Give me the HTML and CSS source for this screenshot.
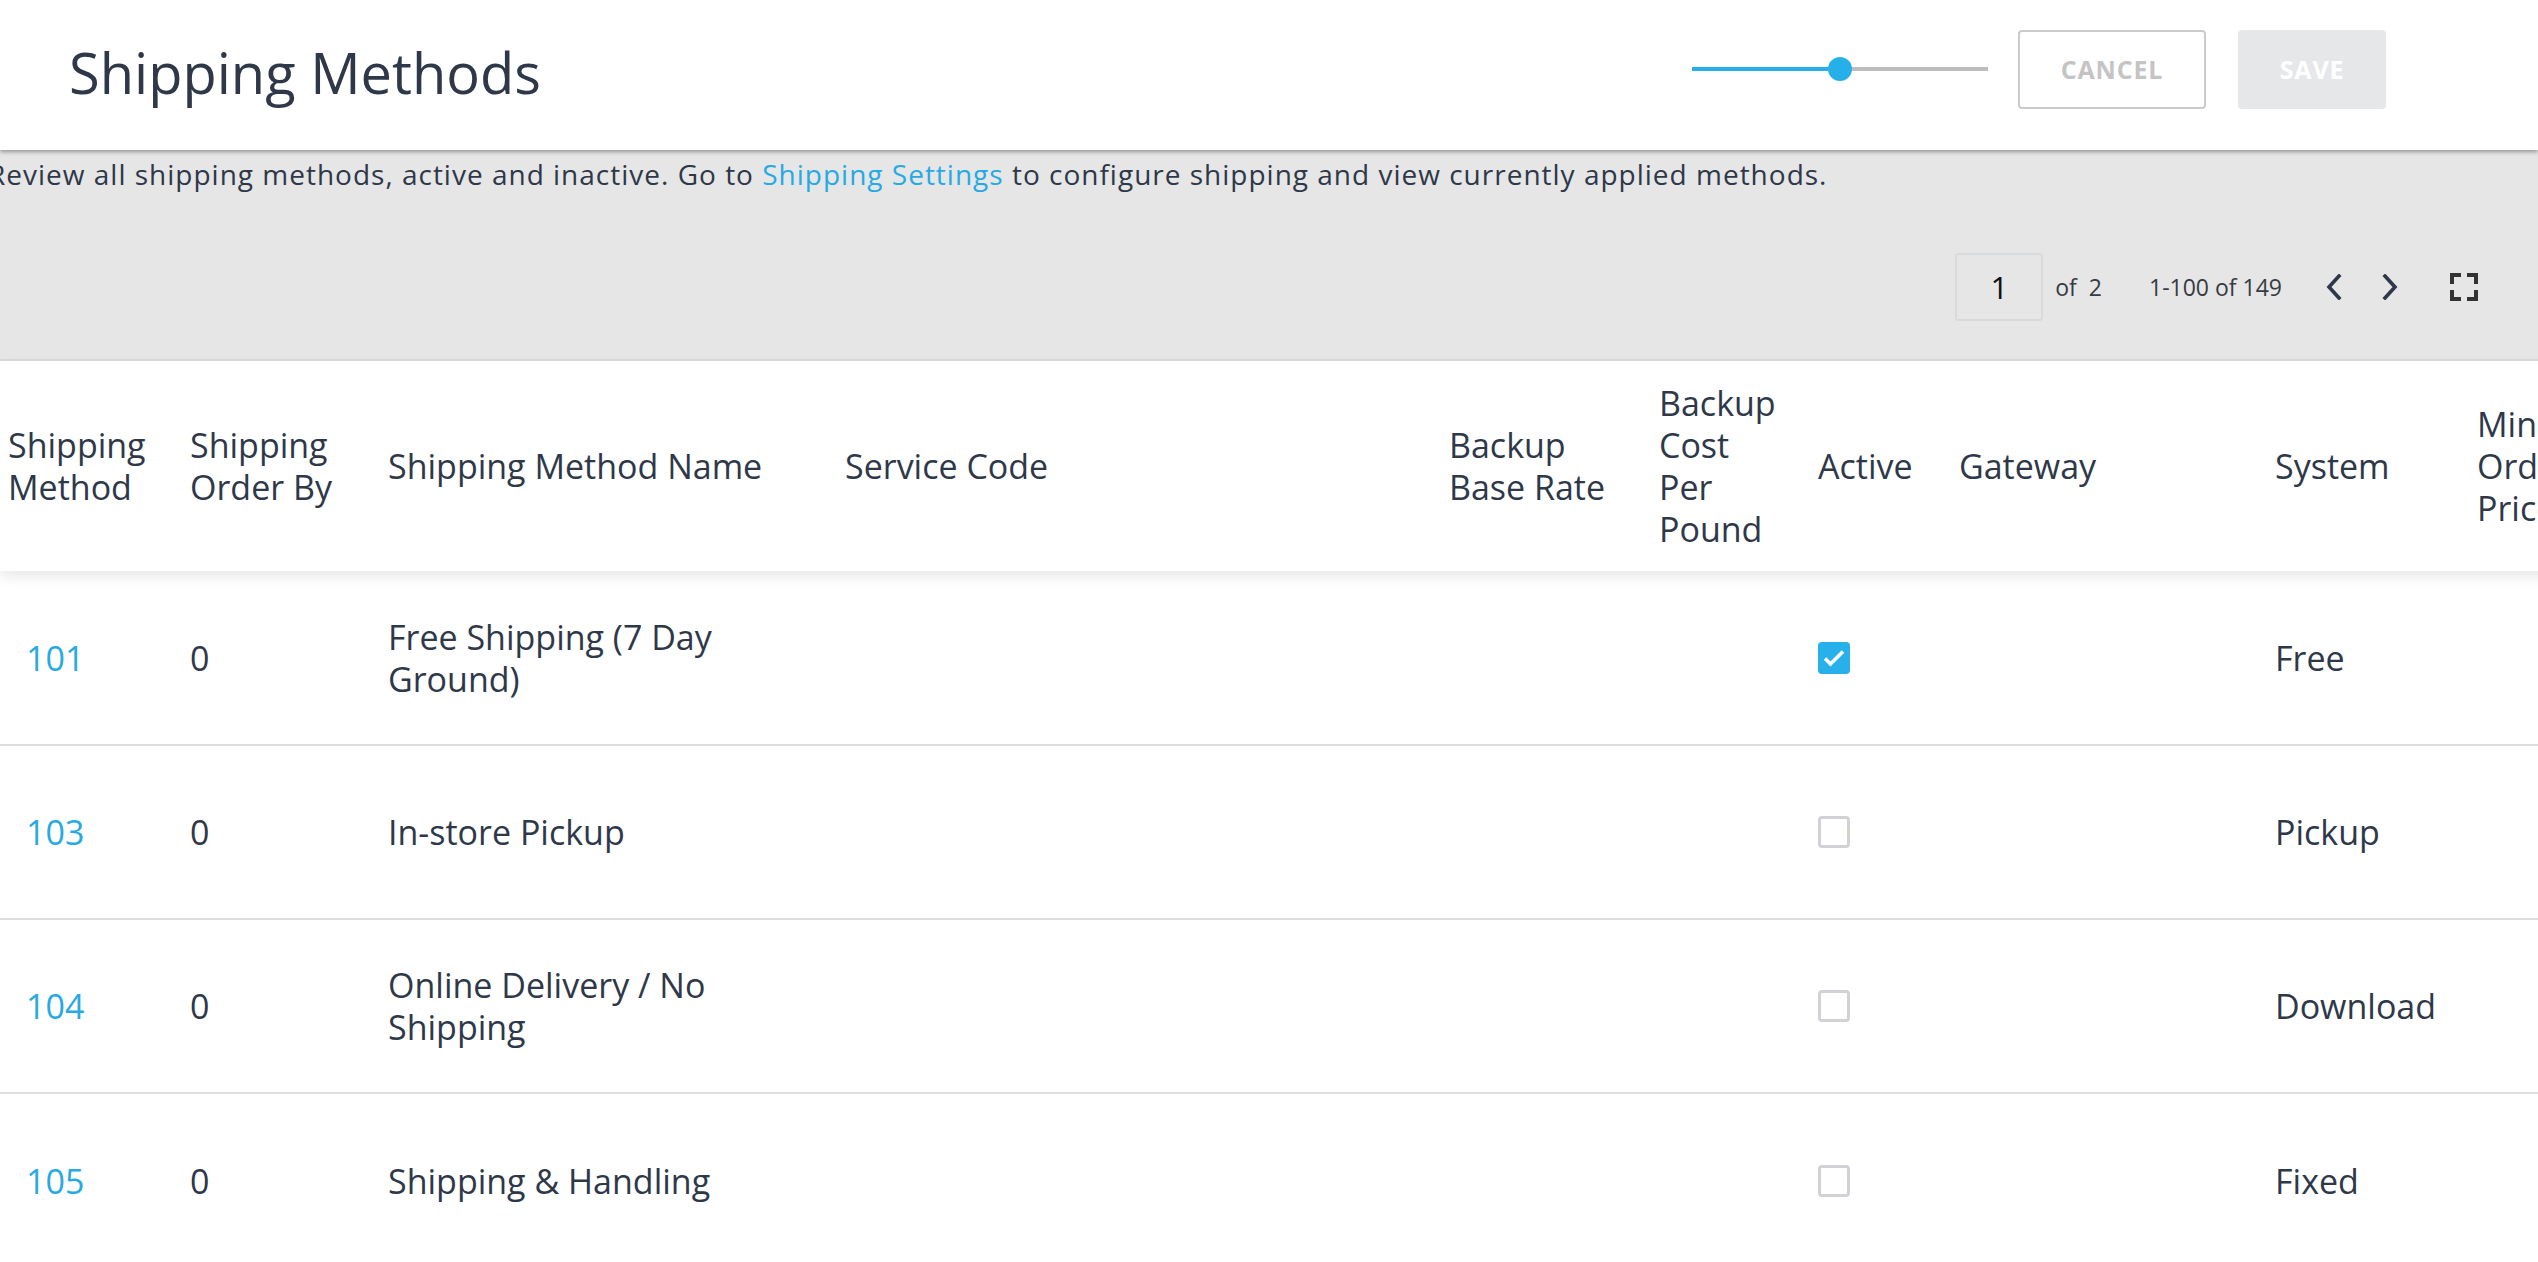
FILE: index.html
```html
<!DOCTYPE html>
<html lang="en">
<head>
<meta charset="utf-8">
<title>Shipping Methods</title>
<link rel="stylesheet" href="styles.css">
</head>
<body>
<header class="topbar">
  <h1 class="title">Shipping Methods</h1>
  <div class="actions">
    <div class="slider">
      <span class="slider-fill"></span>
      <span class="slider-thumb"></span>
      <span class="slider-rest"></span>
    </div>
    <button class="btn btn-cancel" type="button">CANCEL</button>
    <button class="btn btn-save" type="button">SAVE</button>
  </div>
</header>

<section class="toolbar">
  <p class="desc">Review all shipping methods, active and inactive. Go to <a class="link" href="#">Shipping Settings</a> to configure shipping and view currently applied methods.</p>
  <div class="pager">
    <span class="page-box">1</span>
    <span class="page-of"><span>of</span><span>2</span></span>
    <span class="page-range">1-100 of 149</span>
    <span class="icon icon-prev"><svg viewBox="0 0 16 26" width="16" height="26"><path d="M13 2 L3 13 L13 24" fill="none" stroke="#2e3849" stroke-width="3.6" stroke-linecap="square"/></svg></span>
    <span class="icon icon-next"><svg viewBox="0 0 16 26" width="16" height="26"><path d="M3 2 L13 13 L3 24" fill="none" stroke="#2e3849" stroke-width="3.6" stroke-linecap="square"/></svg></span>
    <span class="icon icon-full"><svg viewBox="0 0 28 28" width="28" height="28"><path d="M2 11 V2 H11 M17 2 H26 V11 M26 17 V26 H17 M11 26 H2 V17" fill="none" stroke="#333" stroke-width="4"/></svg></span>
  </div>
</section>

<table class="grid">
  <colgroup>
    <col class="c1"><col class="c2"><col class="c3"><col class="c4"><col class="c5"><col class="c6"><col class="c7"><col class="c8"><col class="c9"><col class="c10">
  </colgroup>
  <thead>
    <tr>
      <th class="first">Shipping Method</th>
      <th>Shipping Order By</th>
      <th class="name">Shipping Method Name</th>
      <th>Service Code</th>
      <th class="narrow">Backup Base Rate</th>
      <th class="narrow tight">Backup Cost Per Pound</th>
      <th>Active</th>
      <th>Gateway</th>
      <th>System</th>
      <th class="narrow tight">Min Order Price</th>
    </tr>
  </thead>
  <tbody>
    <tr>
      <td class="first"><a class="link id" href="#">101</a></td>
      <td>0</td>
      <td class="name">Free Shipping (7 Day Ground)</td>
      <td></td><td></td><td></td>
      <td><span class="check on"><svg viewBox="0 0 32 32" width="32" height="32"><path d="M7 16.5 L12.5 22 L25 9.5" fill="none" stroke="#fff" stroke-width="3.6"/></svg></span></td>
      <td></td>
      <td>Free</td>
      <td></td>
    </tr>
    <tr>
      <td class="first"><a class="link id" href="#">103</a></td>
      <td>0</td>
      <td class="name">In-store Pickup</td>
      <td></td><td></td><td></td>
      <td><span class="check"></span></td>
      <td></td>
      <td>Pickup</td>
      <td></td>
    </tr>
    <tr>
      <td class="first"><a class="link id" href="#">104</a></td>
      <td>0</td>
      <td class="name">Online Delivery / No Shipping</td>
      <td></td><td></td><td></td>
      <td><span class="check"></span></td>
      <td></td>
      <td>Download</td>
      <td></td>
    </tr>
    <tr>
      <td class="first"><a class="link id" href="#">105</a></td>
      <td>0</td>
      <td class="name">Shipping &amp; Handling</td>
      <td></td><td></td><td></td>
      <td><span class="check"></span></td>
      <td></td>
      <td>Fixed</td>
      <td></td>
    </tr>
  </tbody>
</table>
</body>
</html>
```

FILE: styles.css
```css
* { box-sizing: border-box; }

html, body {
  margin: 0;
  padding: 0;
  background: #ffffff;
  overflow: hidden;
}

body {
  width: 2538px;
  height: 1262px;
  font-family: "Open Sans", Lato, sans-serif;
  color: #2e3849;
  font-size: 28px;
  line-height: 42px;
}

.topbar {
  position: relative;
  z-index: 2;
  height: 150px;
  display: flex;
  align-items: center;
  justify-content: space-between;
  padding: 0 152px 12px 69px;
  background: #fff;
  box-shadow: 0 2px 4px rgba(0, 0, 0, 0.35);
}

.title {
  margin: 0;
  font-weight: 400;
  font-size: 56px;
  line-height: 64px;
  color: #2e3849;
  padding-top: 6px;
}

.actions {
  display: flex;
  align-items: center;
}

.slider {
  display: flex;
  align-items: center;
  width: 296px;
  margin-right: 30px;
}
.slider-fill {
  width: 136px;
  height: 4px;
  background: #27afe9;
}
.slider-thumb {
  width: 24px;
  height: 24px;
  border-radius: 50%;
  background: #27afe9;
}
.slider-rest {
  width: 136px;
  height: 4px;
  background: #bdbdbd;
}

.btn {
  font-family: "Open Sans", sans-serif;
  font-weight: 700;
  font-size: 25px;
  letter-spacing: 0.8px;
  height: 79px;
  border-radius: 4px;
  cursor: default;
}
.btn-cancel {
  width: 188px;
  background: #fff;
  border: 2px solid #cbcbcb;
  color: #c4c4c4;
}
.btn-save {
  width: 148px;
  margin-left: 32px;
  background: #e6e7e9;
  border: none;
  color: #ffffff;
}

.toolbar {
  height: 211px;
  background: #e6e6e6;
  border-bottom: 2px solid #d9d9d9;
  display: flex;
  flex-direction: column;
}

.desc {
  margin: 3px 0 0 -12px;
  white-space: nowrap;
  line-height: 42px;
  letter-spacing: 1px;
}

.link {
  color: #27aae3;
  text-decoration: none;
}

.pager {
  display: flex;
  align-items: center;
  justify-content: flex-end;
  padding-right: 60px;
  margin-top: 58px;
  font-size: 23px;
  color: #363b44;
}
.page-box {
  width: 88px;
  height: 68px;
  border: 2px solid #d8dbdd;
  border-radius: 3px;
  display: flex;
  align-items: center;
  justify-content: center;
  font-size: 31px;
  color: #111;
}
.page-of {
  display: flex;
  gap: 12px;
  margin-left: 12px;
}
.page-range { margin-left: 47px; }
.icon { display: flex; }
.icon-prev { margin-left: 44px; }
.icon-next { margin-left: 40px; }
.icon-full { margin-left: 52px; }

.grid {
  border-collapse: collapse;
  table-layout: fixed;
  width: 2637px;
  font-size: 34px;
  line-height: 42px;
}
.c1 { width: 190px; }
.c2 { width: 198px; }
.c3 { width: 457px; }
.c4 { width: 604px; }
.c5 { width: 210px; }
.c6 { width: 159px; }
.c7 { width: 141px; }
.c8 { width: 316px; }
.c9 { width: 202px; }
.c10 { width: 160px; }

.grid thead tr {
  height: 210px;
  box-shadow: 0 6px 12px rgba(0, 0, 0, 0.09);
}
.grid th {
  font-weight: 400;
  text-align: left;
  vertical-align: middle;
  padding: 0 20px 0 0;
}
.grid th.first, .grid td.first { padding-left: 8px; }
.grid th.name, .grid td.name { padding-right: 46px; }
.grid th.narrow { padding-right: 26px; }
.grid th.tight { padding-right: 36px; }

.grid tbody tr {
  height: 174px;
  border-top: 2px solid #dddddd;
}
.grid tbody tr:first-child { border-top: none; }
.grid td {
  vertical-align: middle;
  padding: 0 20px 0 0;
}
.id { padding-left: 18px; }

.check {
  display: block;
  width: 32px;
  height: 32px;
  border: 3px solid #d0d2d6;
  border-radius: 4px;
  background: #fff;
}
.check.on {
  border: none;
  background: #27b0ea;
}
.check svg { display: block; }
```
